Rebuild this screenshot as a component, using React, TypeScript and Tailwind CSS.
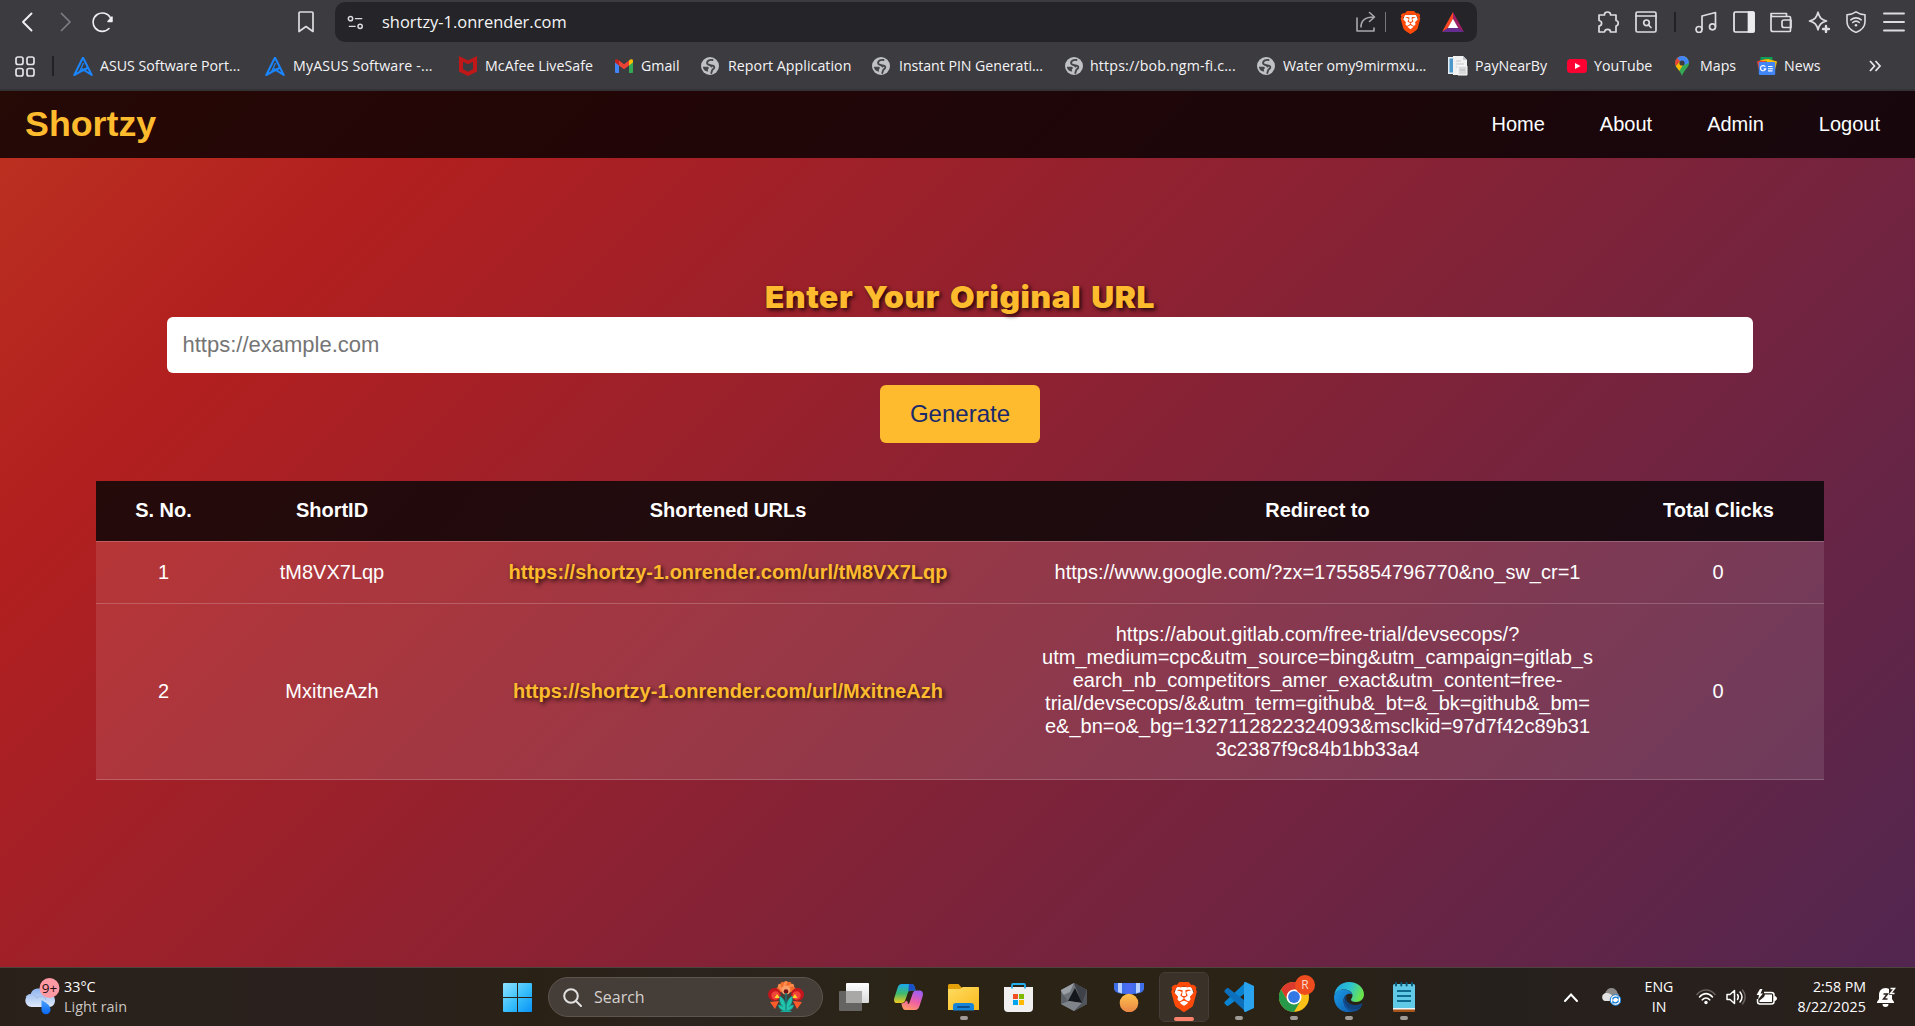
import React from "react";
import { SiBrave } from "react-icons/si";

const ui = "font-['Open_Sans',sans-serif]";
const arial = "font-['Liberation_Sans',Arial,sans-serif]";

/* ---------- browser toolbar icons ---------- */

function Line({ children, size = 22, sw = 1.5, color = "#dddde0" }: { children: React.ReactNode; size?: number; sw?: number; color?: string }) {
  return (
    <svg width={size} height={size} viewBox="0 0 22 22" fill="none" stroke={color} strokeWidth={sw} strokeLinecap="round" strokeLinejoin="round" className="block shrink-0">
      {children}
    </svg>
  );
}

const Back = () => <Line sw={1.9} color="#f0f0f2"><path d="M15.500 2.500 7 11l8.500 8.500" /></Line>;
const Forward = () => <Line sw={1.7} color="#7d7d82"><path d="M7.500 2.500 16 11l-8.500 8.500" /></Line>;
const Reload = () => (
  <Line sw={1.6} color="#f0f0f2">
    <path d="M17 17.500A9.200 9.200 0 1 1 18.500 7" />
    <path d="M20 6v4.500h-4z" fill="#f0f0f2" strokeWidth="1.500" />
  </Line>
);
const Bookmark = () => <Line sw={1.7}><path d="M5 1h12a1 1 0 0 1 1 1v18.500l-7-5-7 5V2a1 1 0 0 1 1-1z" /></Line>;
const Tune = () => (
  <Line size={17} sw={1.9}>
    <circle cx="4.500" cy="6" r="2.800" /><path d="M11 6h8M3 16h7.500" /><circle cx="17" cy="16" r="2.800" />
  </Line>
);
const Share = () => (
  <Line sw={1.6} color="#a9a9ad">
    <path d="M2 7v13h17v-3M6 16c0-6 3-10 13-10M14.500 1.500 19.500 6l-5 4.500" />
  </Line>
);
const Puzzle = () => (
  <Line sw={1.7}>
    <path d="M2 4h5.500C7 0 14 0 13.500 4H19v5.500c3 .5 3 5 0 5.500v6h-5.500c0-3.500-5.500-3.500-6 0H2v-6c3.500-.5 3.500-5 0-5.500z" />
  </Line>
);
const PageSearch = () => (
  <Line sw={1.7}>
    <rect x="1" y="1" width="20" height="20" rx="1.500" /><path d="M1 5h20M13.500 14l2.500 2.500" /><circle cx="11.500" cy="11.800" r="2.800" />
  </Line>
);
const Music = () => (
  <Line sw={1.7}>
    <circle cx="4" cy="18.500" r="3" /><circle cx="17.500" cy="15.800" r="3" /><path d="M7 18.500V5l13.500-3.500v14" />
  </Line>
);
const Sidebar = () => (
  <Line sw={1.7} color="#ececef"><rect x="1" y="1" width="20" height="20" rx="1.500" /><path d="M15.500 1H20a1 1 0 0 1 1 1v18a1 1 0 0 1-1 1h-4.500z" fill="#ececef" /></Line>
);
const Wallet = () => (
  <Line sw={1.7}>
    <path d="M1 2.500h15.500v3M1 2.500v16a2 2 0 0 0 2 2h16.500a1 1 0 0 0 1-1V6.500a1 1 0 0 0-1-1H3a2 2 0 0 1-2-2" />
    <path d="M21 9h-7a2 2 0 0 0-2 2v3.500a2 2 0 0 0 2 2h7z" />
  </Line>
);
const Sparkle = () => (
  <Line sw={1.7}>
    <path d="M10 1.200c1.500 5.500 3 7.300 8.500 8.800-5.500 1.500-7 3.300-8.500 8.800C8.500 13.300 7 11.500 1.500 10 7 8.500 8.500 6.700 10 1.200z" />
    <path d="M18 15v6M15 18h6" strokeWidth="2.400" />
  </Line>
);
const Vpn = () => (
  <Line sw={1.6}>
    <path d="M11 .8c3 2 5.500 2.700 9 2.900v7c0 5-3.500 8.500-9 10.700C5.500 19.200 2 15.700 2 10.700v-7C5.500 3.500 8 2.800 11 .8z" />
    <path d="M5.800 8.800c3-2.600 7.400-2.600 10.400 0M7.700 11.500c2-1.700 4.600-1.700 6.600 0" /><circle cx="11" cy="14.200" r="1.300" fill="#dddde0" stroke="none" />
  </Line>
);
const Menu = () => <Line sw={1.9}><path d="M1 2.500h20M1 11h20M1 19.500h20" /></Line>;

function Brave({ size, className = "" }: { size: number; className?: string }) {
  return (
    <span className={`grid shrink-0 place-items-center ${className}`}>
      <svg width={size} height={size} viewBox="0 0 24 24" className="col-start-1 row-start-1">
        <path d="M6 4h12l2 6-3 8-5 3.500L7 18l-3-8z" fill="#fff" />
      </svg>
      <SiBrave size={size} color="#ff4a0a" className="col-start-1 row-start-1" />
    </span>
  );
}
const Bat = () => (
  <svg width="22" height="20" viewBox="0 0 22 20" className="shrink-0">
    <path d="M11 0 0 20l6-4 5-9z" fill="#ff4724" />
    <path d="M11 0l11 20-6-4-5-9z" fill="#9e1f63" />
    <path d="M0 20h22l-6-4H6z" fill="#662d91" />
    <path d="m11 6.800 5.200 9.200H5.800z" fill="#fff" />
  </svg>
);

/* ---------- bookmark icons ---------- */

const Asus = () => (
  <svg width="20" height="21" viewBox="0 0 20 21" fill="none" stroke="#1a86ff" strokeWidth="2" strokeLinejoin="round">
    <path d="M10 1.500 1.300 19l4.700-2.600L14.500 12M10 1.500 18.700 19 8.500 12.500" />
    <path d="M6 17 10.500 7" strokeWidth="1.300" />
  </svg>
);
const McAfee = () => (
  <svg width="18" height="20" viewBox="0 0 18 20"><path d="M0 0l9 4.500L18 0v15.500L9 20l-9-4.500zM4 5.800v7.400l5 2.500 5-2.500V5.800L9 8.300z" fill="#c01818" fillRule="evenodd" /></svg>
);
const Gmail = () => (
  <svg width="18" height="14" viewBox="0 0 18 14">
    <path d="M0 2v11a1 1 0 0 0 1 1h3V5z" fill="#4285f4" /><path d="M18 2v11a1 1 0 0 1-1 1h-3V5z" fill="#34a853" />
    <path d="M4 1.500 9 5.300l5-3.800v5L9 10.300 4 6.500z" fill="#ea4335" />
    <path d="M0 2C0 0 2-.3 4 1.500v5L0 3.500z" fill="#c5221f" /><path d="M18 2c0-2-2-2.300-4-.5v5l4-3z" fill="#fbbc04" />
  </svg>
);
const Globe = () => (
  <svg width="18" height="18" viewBox="0 0 18 18">
    <circle cx="9" cy="9" r="9" fill="#bfc1c5" />
    <path d="M11.500 3C8 2.500 6 4 6 6c0 2.500 4.500 1.500 4.500 3.500" fill="none" stroke="#46454a" strokeWidth="1.900" strokeLinecap="round" />
    <path d="M1.900 9.800h4.600c1.800 0 1.500 1.700.8 2.300-.6.600-.6 1.500 0 2.300C4.300 15 2 12.700 1.900 9.800z" fill="#46454a" />
    <path d="M10 8.500c3 0 3.500 1 3.200 2.200-.3 1.500-1.700 1.300-2.200 3l-.7 2.300" fill="none" stroke="#46454a" strokeWidth="1.900" strokeLinecap="round" />
  </svg>
);
const Paper = () => (
  <svg width="20" height="20" viewBox="0 0 20 20">
    <path d="M0 1h7v17H0z" fill="#e6eef5" /><path d="M1.500 2.500h3.500v14H1.500z" fill="#4c97c9" />
    <path d="M5 0h10l4 4v15H5z" fill="#f1f1f1" /><path d="M15 0v4h4z" fill="#bcc7cf" />
    <path d="M8 5h5M8 8h8M8 11h3" stroke="#c3cbd1" strokeWidth="1" /><path d="M10 10h9v9h-9z" fill="#dadada" stroke="#fff" /><path d="M12 14h5" stroke="#b5bac0" />
  </svg>
);
const YouTube = () => (
  <svg width="20" height="14" viewBox="0 0 20 14"><rect width="20" height="14" rx="3.500" fill="#ff0033" /><path d="m8 4 5.500 3L8 10z" fill="#fff" /></svg>
);
const Maps = () => (
  <svg width="14" height="20" viewBox="0 0 14 20">
    <clipPath id="pin"><path d="M7 0a7 7 0 0 1 7 7c0 4.500-4.500 6-7 13C4.500 13 0 11.500 0 7a7 7 0 0 1 7-7z" /></clipPath>
    <g clipPath="url(#pin)">
      <path d="M0 0h14v20H0z" fill="#34a853" /><path d="M-2 13 9 0h5L3.500 16z" fill="#fbbc04" />
      <path d="M0 0h9L1 10-3 6z" fill="#ea4335" /><path d="M2 2 7 7l5-6L7-1z" fill="#4285f4" /><path d="m9 0 5 3v4L9.500 9 7 7z" fill="#4285f4" />
    </g>
    <circle cx="7" cy="7" r="2.600" fill="#3c3b40" />
  </svg>
);
const News = () => (
  <svg width="20" height="18" viewBox="0 0 20 18">
    <path d="M3.500 0h12v6h-12z" fill="#0c9d58" /><path d="m0 4.500 8-2.500 3 8-9 3z" fill="#ea4335" /><path d="m20 4.500-9-2.500-4 8 11 3z" fill="#fbbc04" /><path d="M2 4l8-2 5 2z" fill="#fbbc04" />
    <rect x="1.800" y="5" width="16.400" height="13" rx="1" fill="#4285f4" />
    <path d="M8.300 9.800a2.600 2.600 0 1 0 .3 2h-2" stroke="#fff" strokeWidth="1.200" fill="none" /><path d="M11 9.500h4.500M11 11.700h5M11 13.900h4.500" stroke="#fff" strokeWidth="1.100" />
  </svg>
);

const bookmarks = [
  { Icon: Asus, label: "ASUS Software Port...", w: "w-[192px]", slot: "w-[27px]", fit: "" },
  { Icon: Asus, label: "MyASUS Software -...", w: "w-[194px]", slot: "w-[28px]", fit: "tracking-[0.150px]" },
  { Icon: McAfee, label: "McAfee LiveSafe", w: "w-[156px]", slot: "w-[26px]", fit: "tracking-[0.050px]" },
  { Icon: Gmail, label: "Gmail", w: "w-[86px]", slot: "w-[26px]", fit: "" },
  { Icon: Globe, label: "Report Application", w: "w-[171px]", slot: "w-[27px]", fit: "tracking-[0.050px]" },
  { Icon: Globe, label: "Instant PIN Generati...", w: "w-[193px]", slot: "w-[27px]", fit: "tracking-[-0.050px]" },
  { Icon: Globe, label: "https://bob.ngm-fi.c...", w: "w-[192px]", slot: "w-[25px]", fit: "tracking-[0.160px]" },
  { Icon: Globe, label: "Water omy9mirmxu...", w: "w-[191px]", slot: "w-[26px]", fit: "" },
  { Icon: Paper, label: "PayNearBy", w: "w-[119px]", slot: "w-[27px]", fit: "" },
  { Icon: YouTube, label: "YouTube", w: "w-[108px]", slot: "w-[27px]", fit: "" },
  { Icon: Maps, label: "Maps", w: "w-[82px]", slot: "w-[25px]", fit: "" },
  { Icon: News, label: "News", w: "w-[111px]", slot: "w-[27px]", fit: "" },
];

function BrowserChrome() {
  return (
    <header className={`flex h-[91px] shrink-0 flex-col border-b-2 border-[#323237] bg-[#3c3b40] text-[#f4f4f6] ${ui}`}>
      <div className="flex h-11 items-center pl-4">
        <div className="flex w-[279px] items-center gap-4">
          <Back /><Forward /><Reload />
        </div>
        <Bookmark />
        <div className="ml-[18px] flex h-10 w-[1142px] items-center rounded-[10px] bg-[#252428] pl-3 pr-[13px]">
          <Tune />
          <span className="ml-[18px] whitespace-pre text-[16.450px] leading-none">shortzy-1.onrender.com</span>
          <div className="ml-auto flex items-center">
            <Share />
            <span className="ml-2 h-5 w-px bg-[#77777b]" />
            <Brave size={23} className="ml-[13px]" />
            <span className="ml-[20px] flex"><Bat /></span>
          </div>
        </div>
        <div className="ml-[120px] flex items-center gap-4">
          <Puzzle /><PageSearch />
        </div>
        <span className="ml-[17px] h-5 w-0.5 bg-[#222225]" />
        <div className="ml-[19px] flex items-center gap-[15.500px]">
          <Music /><Sidebar /><Wallet /><Sparkle /><Vpn /><Menu />
        </div>
      </div>
      <div className="flex h-[44px] items-center pl-[15px]">
        <svg width="20" height="21" viewBox="0 0 20 21" fill="none" stroke="#e4e4e6" strokeWidth="1.700">
          <rect x="1" y="1" width="7" height="7.500" rx="2" /><rect x="12" y="1" width="7" height="7.500" rx="2" /><rect x="1" y="12.500" width="7" height="7.500" rx="2" /><rect x="12" y="12.500" width="7" height="7.500" rx="2" />
        </svg>
        <span className="ml-[17px] mr-[19px] h-5 w-0.5 shrink-0 bg-[#222225]" />
        {bookmarks.map(({ Icon, label, w, slot, fit }) => (
          <div key={label} className={`flex shrink-0 items-center ${w}`}>
            <span className={`flex shrink-0 ${slot}`}><Icon /></span>
            <span className={`whitespace-nowrap text-[14.200px] leading-none ${fit}`}>{label}</span>
          </div>
        ))}
        <svg width="14" height="14" viewBox="0 0 14 14" fill="none" stroke="#e4e4e6" strokeWidth="1.800"><path d="m2 2 4.500 5L2 12M7.500 2 12 7l-4.500 5" /></svg>
      </div>
    </header>
  );
}

/* ---------- web page ---------- */

const links = [
  { id: "tM8VX7Lqp", to: ["https://www.google.com/?zx=1755854796770&no_sw_cr=1"], h: "h-[62px]" },
  {
    id: "MxitneAzh",
    to: [
      "https://about.gitlab.com/free-trial/devsecops/?",
      "utm_medium=cpc&utm_source=bing&utm_campaign=gitlab_s",
      "earch_nb_competitors_amer_exact&utm_content=free-",
      "trial/devsecops/&&utm_term=github&_bt=&_bk=github&_bm=",
      "e&_bn=o&_bg=1327112822324093&msclkid=97d7f42c89b31",
      "3c2387f9c84b1bb33a4",
    ],
    h: "h-[176px]",
  },
];

function Page() {
  return (
    <main className={`flex min-h-0 flex-1 flex-col bg-[linear-gradient(135deg,#fdbb2d_-115.500%,#b21f1f_16.500%,#1a2a6c_148%)] text-white ${arial}`}>
      <nav className="flex h-[67px] shrink-0 items-center justify-between bg-black/80 pl-[25px] pr-[35px]">
        <span className="text-[35.800px] font-bold leading-none text-[#fdbb2d]">Shortzy</span>
        <div className="flex gap-[55px] pb-0.5 text-[20px]">
          <a>Home</a><a>About</a><a>Admin</a><a>Logout</a>
        </div>
      </nav>
      <form className="mt-[120px] flex flex-col items-center pl-[5px]">
        <label className="flex h-[39px] scale-x-[1.060] items-center whitespace-nowrap pb-0.5 font-['Inter',sans-serif] text-[30px] font-black leading-none tracking-[0.500px] text-[#fdbb2d] [text-shadow:2px_2px_4px_rgba(0,0,0,0.800)] [word-spacing:3px]">Enter Your Original URL</label>
        <input className="h-[56px] w-[1586px] rounded-[6px] bg-white pl-[15.500px] text-[22px] placeholder:text-[#757575]" placeholder="https://example.com" />
        <button type="button" className="mt-3 h-[58px] w-[160px] rounded-[6px] bg-[#fdbb2d] text-[24px] text-[#1a2a6c]">Generate</button>
      </form>
      <table className="ml-[96px] mt-[38px] w-[1728px] table-fixed border-collapse bg-white/10 text-center text-[20px] leading-[23px]">
        <colgroup>
          <col className="w-[134px]" /><col className="w-[203px]" /><col className="w-[590px]" /><col className="w-[588px]" /><col className="w-[213px]" />
        </colgroup>
        <thead>
          <tr className="h-[60px] border-b border-white/20 bg-black/80">
            <th className="pl-px">S. No.</th><th className="pl-px">ShortID</th><th>Shortened URLs</th><th className="pl-px">Redirect to</th><th className="pl-0.5">Total Clicks</th>
          </tr>
        </thead>
        <tbody>
          {links.map((l, i) => (
            <tr key={l.id} className={`border-b border-white/20 ${l.h}`}>
              <td className="pl-px">{i + 1}</td>
              <td className="pl-px">{l.id}</td>
              <td className="font-bold text-[#fdbb2d] [text-shadow:2px_2px_4px_rgba(0,0,0,0.800)]">https://shortzy-1.onrender.com/url/{l.id}</td>
              <td className={i === 1 ? "pt-0.5" : ""}>{l.to.map((t) => <div key={t} className="whitespace-nowrap pl-px">{t}</div>)}</td>
              <td className="pl-px">0</td>
            </tr>
          ))}
        </tbody>
      </table>
    </main>
  );
}

/* ---------- taskbar icons ---------- */

const Weather = () => (
  <svg width="36" height="38" viewBox="0 0 36 38">
    <defs>
      <linearGradient id="cloud" x1="0" y1="0" x2="0" y2="1"><stop stopColor="#8db4ee" /><stop offset="1" stopColor="#dfe9fb" /></linearGradient>
      <linearGradient id="drop" x1="0" y1="0" x2="0" y2="1"><stop stopColor="#4ba3ff" /><stop offset="1" stopColor="#0a66f0" /></linearGradient>
    </defs>
    <path d="M6.500 29a6.500 6.500 0 0 1-.8-12.900C7 11.500 11 10 15 10.500c4.500-1 8 2 8.500 5.500 5 .5 6.500 3.500 6.500 6.500s-2 6.500-6 6.500z" fill="url(#cloud)" />
    <path d="M1 19c4-4 9-3 11 1 3-3 8-2 9 2" fill="none" stroke="#a5bfe9" strokeWidth="1.200" />
    <path d="M16.500 22c5.500 3 9 6 9 9.700a4.500 4.500 0 0 1-9 0z" fill="url(#drop)" />
    <circle cx="24.500" cy="10" r="10" fill="#ff99a4" />
    <text x="24.500" y="15" textAnchor="middle" fontSize="13.500" fontFamily="Open Sans, sans-serif" fill="#1c1012">9+</text>
  </svg>
);
const Start = () => (
  <svg width="29" height="29" viewBox="0 0 29 29">
    <linearGradient id="win" x1="0" y1="0" x2="1" y2="1"><stop stopColor="#8ee2ff" /><stop offset=".55" stopColor="#35bdfb" /><stop offset="1" stopColor="#0a93f5" /></linearGradient>
    <path d="M1 0h13v14H0V1a1 1 0 0 1 1-1zM15 0h13a1 1 0 0 1 1 1v13H15zM0 15h14v14H1a1 1 0 0 1-1-1zM15 15h14v13a1 1 0 0 1-1 1H15z" fill="url(#win)" />
  </svg>
);
const Flower = () => (
  <svg width="36" height="32" viewBox="0 0 36 32">
    {[-75, -50, -25, 0, 25, 50, 75].map((a) => <ellipse key={a} cx="18" cy="4.500" rx="2.600" ry="4.500" fill={a % 50 ? "#f06a2a" : "#ff8a4c"} transform={`rotate(${a} 18 10)`} />)}
    <circle cx="18" cy="9" r="4.500" fill="#f9a06a" /><circle cx="18" cy="10.500" r="2.300" fill="#6d1018" />
    <circle cx="6.500" cy="13.500" r="6.500" fill="#c3151d" /><circle cx="29.500" cy="13.500" r="6.500" fill="#c3151d" />
    <circle cx="7.500" cy="14.500" r="4.200" fill="#f04438" /><circle cx="28.500" cy="14.500" r="4.200" fill="#f04438" />
    <path d="m6.500 17 2.500-4 3 4zM24 17l3-4 2.500 4z" fill="#ffd42a" />
    <path d="m2 21 9-1-4 8zM34 21l-9-1 4 8z" fill="#ff5a2a" />
    <path d="M18 12v19" stroke="#0e7c78" strokeWidth="1.500" />
    <path d="M17.500 30c-5-1-7-3-7-6 2 0 3.500.5 4.500 2-3-3-4-7-3-11 3 2 5 5 5.500 9M18.500 30c5-1 7-3 7-6-2 0-3.500.5-4.500 2 3-3 4-7 3-11-3 2-5 5-5.500 9" fill="#22c3ac" stroke="#128f86" strokeWidth=".6" />
    <path d="M12 31c3-3 9-3 12 0z" fill="#19a99a" />
  </svg>
);
const TaskView = () => (
  <svg width="30" height="28" viewBox="0 0 30 28">
    <linearGradient id="tv" x1="0" y1="0" x2="0" y2="1"><stop stopColor="#fff" /><stop offset="1" stopColor="#d9d9d9" /></linearGradient>
    <rect x="0" y="8" width="23" height="20" rx="1" fill="#666463" /><rect x="7" y="0" width="23" height="20" rx="1" fill="url(#tv)" /><path d="M7 8h16v12H8a1 1 0 0 1-1-1z" fill="#a9a8a7" />
  </svg>
);
const Copilot = () => (
  <svg width="29" height="26" viewBox="0 0 29 26">
    <defs>
      <linearGradient id="ca" x1="0" y1="0" x2="0" y2="1"><stop stopColor="#1aa7ee" /><stop offset=".5" stopColor="#3fba6d" /><stop offset="1" stopColor="#f5c91c" /></linearGradient>
      <linearGradient id="cb" x1=".6" y1="0" x2=".2" y2="1"><stop stopColor="#a25df0" /><stop offset=".5" stopColor="#ef5fa5" /><stop offset="1" stopColor="#ff9c62" /></linearGradient>
    </defs>
    <path d="M8 0h9.500c2 0 2.700 1.500 3.200 3l1 3.500h-4.500c-2.200 0-3 1-3.600 3L11.500 15.500c-.8 2.500-1.800 3.500-4.200 3.500H3.500C.5 19.500-.5 17 .3 14L3.500 4C4.300 1.500 5.500 0 8 0z" fill="url(#ca)" />
    <path d="M15 0h2.500c2 0 2.700 1.500 3.200 3l1 3.500h-4.500c-1.500 0-2.500.6-3 1.800z" fill="#1a50c9" />
    <path d="M21 26h-9.500c-2 0-2.700-1.500-3.200-3l-1-3.500c2.200 0 4-1 4.600-3l2 1.500c-.6 1.800 0 3 1.500 1l3.100-9c.8-2.500 1.800-3.500 4.200-3.500h2.800c3 0 4 2.500 3.200 5.500L25.500 22c-.8 2.500-2 4-4.500 4z" fill="url(#cb)" />
  </svg>
);
const Explorer = () => (
  <svg width="31" height="28" viewBox="0 0 31 28">
    <linearGradient id="fo" x1="0" y1="0" x2="1" y2="1"><stop stopColor="#ffdc62" /><stop offset="1" stopColor="#f9b91c" /></linearGradient>
    <path d="M1.500 1h9l3 3.500H31V10H0V2.500A1.500 1.500 0 0 1 1.500 1z" fill="#e3a008" /><path d="M0 6h12l3-2h15a1 1 0 0 1 1 1v22H0z" fill="url(#fo)" />
    <path d="M5 27.500V23a3 3 0 0 1 3-3h15a3 3 0 0 1 3 3v4.500z" fill="#1684d8" /><path d="M10 24h11" stroke="#0b4f90" strokeWidth="1.800" strokeLinecap="round" />
  </svg>
);
const Store = () => (
  <svg width="29" height="29" viewBox="0 0 29 29">
    <path d="M0 4h29v21a4 4 0 0 1-4 4H4a4 4 0 0 1-4-4z" fill="#f0f0f0" />
    <path d="M8 5.500V2a1 1 0 0 1 1-1h11a1 1 0 0 1 1 1v3.500" fill="none" stroke="#23b0ee" strokeWidth="1.800" />
    <path d="M9 11h5v5H9z" fill="#f25022" /><path d="M15 11h5v5h-5z" fill="#7fba00" /><path d="M9 17h5v5H9z" fill="#00a4ef" /><path d="M15 17h5v5h-5z" fill="#ffb900" />
  </svg>
);
const Gem = () => (
  <svg width="26" height="28" viewBox="0 0 26 28">
    <path d="M13 0 26 7v14l-13 7L0 21V7z" fill="#6d7279" /><path d="M13 0 0 7v6l9-4z" fill="#9ba0a6" /><path d="M13 0l13 7-5 14z" fill="#3e4248" /><path d="M0 8v13l8-1z" fill="#5b6067" />
    <path d="M14 5 7 18l14 2z" fill="#14171b" /><path d="M0 21l13 7 8-8-13-2z" fill="#7f848b" /><path d="M26 7v14l-13 7 8-8z" fill="#50555c" />
  </svg>
);
const Medal = () => (
  <svg width="30" height="29" viewBox="0 0 30 29">
    <linearGradient id="me" x1="0" y1="0" x2="0" y2="1"><stop stopColor="#ffc34d" /><stop offset="1" stopColor="#e98545" /></linearGradient>
    <path d="M0 0h30v6c-1 4-5 5-15 5S1 10 0 6z" fill="#3f6fe8" /><path d="M4 0h4v10.500L4 9zM22 0h4v9l-4 1.500z" fill="#b8d0ff" /><path d="M10 0h10l-2 11h-6z" fill="#4b6cf0" />
    <circle cx="15" cy="20" r="9.300" fill="url(#me)" />
  </svg>
);
const VsCode = () => (
  <svg width="30" height="30" viewBox="0 0 30 30">
    <path d="M22 0 1 19.500c-.8.8-.8 1.700 0 2.500l1.500 1.500c.7.600 1.500.700 2.300.1L24 9z" fill="#0a84d0" />
    <path d="m22 30-21-19.500c-.8-.8-.8-1.700 0-2.500l1.500-1.500c.7-.6 1.500-.7 2.300-.1L24 21z" fill="#0c70bd" />
    <path d="M21.500 0 30 4v22l-8.500 4c-.8.200-1.500-.4-1.500-1V1c0-.7.700-1.200 1.500-1z" fill="#2aa4ee" />
  </svg>
);
const Chrome = () => (
  <svg width="30" height="30" viewBox="0 0 30 30">
    <circle cx="15" cy="15" r="15" fill="#fbc116" /><path d="M15 7.500h13A15 15 0 0 0 2 7.500l6.500 11.300z" fill="#dc3a2d" />
    <path d="M2 7.500A15 15 0 0 0 15 30l6.500-11.200L15 22.500l-6.500-3.700z" fill="#27994a" />
    <circle cx="15" cy="15" r="7.500" fill="#fff" /><circle cx="15" cy="15" r="5.900" fill="#3478e5" />
  </svg>
);
const Edge = () => (
  <svg width="30" height="30" viewBox="0 0 30 30">
    <defs>
      <linearGradient id="ea" x1="0" y1="0" x2="1" y2=".3"><stop stopColor="#1a9fe0" /><stop offset=".55" stopColor="#2cc3d2" /><stop offset="1" stopColor="#68e34f" /></linearGradient>
      <linearGradient id="eb" x1="0" y1="0" x2="1" y2="1"><stop stopColor="#1c9be6" /><stop offset="1" stopColor="#0b5cae" /></linearGradient>
    </defs>
    <path d="M.2 13C1.500 5 7.500 0 15 0c9 0 15 6 15 12.500 0 4.500-3.500 7.500-8 7.500-3.500 0-5-1.200-5-2.300 0-1.200 1.500-1.700 1.500-4.200C18.500 10 14.500 7.500 10 7.500 6 7.500 2 9.500.2 13z" fill="url(#ea)" />
    <path d="M0 15c0-4 4.500-7.500 9.500-7.500 4.500 0 8 2 8.800 5C15 10.500 9.500 13 9.500 19c0 5 4.500 9.500 9.500 10.500C9 32.500 0 25.500 0 15z" fill="url(#eb)" />
    <path d="M12.500 13.500C9 19 12.500 27 20.500 27c3 0 5.500-1 7.500-3-2 3.500-5.300 5.500-9 5.800C13 29 9.300 24 9.500 19c.1-2.500 1.200-4.500 3-5.500z" fill="#144f96" />
    <path d="M12.500 13.500c-1.500 6 3 9.500 8.500 9.500 3 0 5-.7 6.500-1.500.8-.4 1.300.2.900.9-2 3.600-5.500 5.200-8.900 5-7-.4-10-8-7-13.900z" fill="#10447f" />
  </svg>
);
const Notepad = () => (
  <svg width="22" height="30" viewBox="0 0 22 30">
    <rect y="25" width="22" height="5" rx="1" fill="#a7541b" /><path d="M0 24h22v3.500H0z" fill="#f3f3f3" /><path d="M1.500 2h19A1.500 1.500 0 0 1 22 3.500V26H0V3.500A1.500 1.500 0 0 1 1.500 2z" fill="#61cbe7" />
    <path d="M3 1v2.500M8.300 1v2.500M13.600 1v2.500M19 1v2.500" stroke="#0b5a78" strokeWidth="2" strokeLinecap="round" /><path d="M4 9h14M4 14h14M4 19h14" stroke="#0d6c90" strokeWidth="1.800" />
  </svg>
);

function Task({ children, w = "w-[55px]", running = false }: { children: React.ReactNode; w?: string; running?: boolean }) {
  return (
    <div className={`relative flex h-[50px] shrink-0 items-center justify-center ${w}`}>
      {children}
      {running && <span className="absolute bottom-0.5 left-1/2 h-1 w-2 -translate-x-1/2 rounded-full bg-[#a19b97]" />}
    </div>
  );
}

const Tray = {
  Caret: () => <svg width="14" height="9" viewBox="0 0 14 9" fill="none" stroke="#fff" strokeWidth="2" strokeLinecap="round"><path d="m1 8 6-6.500L13 8" /></svg>,
  Cloud: () => (
    <svg width="20" height="18" viewBox="0 0 20 18">
      <path d="M4 13a4 4 0 0 1 0-7.500C5 2 7.500 0 10.500 0c3 0 5.500 2 6 5 1.500 1 2 3 1.500 5l-5 3z" fill="#8d8b8a" /><path d="M4 13A4 4 0 0 1 3.500 5.500c4-1.500 7 1 9.500 4l-3 3.500z" fill="#e2e2e2" />
      <circle cx="14.500" cy="12" r="5.300" fill="#fff" stroke="#1a7fd4" /><path d="M11.500 11.500a3.200 3.200 0 0 1 5.500-1.300V8.500M17.500 12.500a3.200 3.200 0 0 1-5.500 1.300v1.700" fill="none" stroke="#1a7fd4" strokeWidth="1.400" />
    </svg>
  ),
  Wifi: () => (
    <svg width="20" height="16" viewBox="0 0 20 16" fill="none" strokeWidth="1.600" strokeLinecap="round">
      <path d="M1 5.500c5-6 13-6 18 0" stroke="#67625f" /><path d="M3.500 8c4-4.500 9-4.500 13 0M6.300 10.800c2.300-2.500 5.100-2.500 7.400 0" stroke="#fff" /><circle cx="10" cy="13.500" r="1.700" fill="#fff" />
    </svg>
  ),
  Sound: () => (
    <svg width="20" height="18" viewBox="0 0 20 18" fill="none" strokeWidth="1.500" strokeLinecap="round" strokeLinejoin="round" stroke="#fff">
      <path d="M1 6.500v5h3l4.500 4V2.500L4 6.500z" /><path d="M11.500 6.500c1 1.500 1 3.500 0 5M14 4c2.400 3 2.400 7 0 10" /><path d="M16.500 2c3.500 4 3.500 10 0 14" stroke="#67625f" />
    </svg>
  ),
  Battery: () => (
    <svg width="21" height="17" viewBox="0 0 21 17">
      <path d="M8 3.500h7.500a2.500 2.500 0 0 1 2.500 2.500v6.500a2.500 2.500 0 0 1-2.500 2.500H4a2.500 2.500 0 0 1-2.500-2.500V10" fill="none" stroke="#fff" strokeWidth="1.500" />
      <path d="M9 5.500h7v7.500h-12.500V11.500L8 8z" fill="#fff" /><path d="M18.500 7.500a2 2 0 0 1 0 4z" fill="#fff" stroke="#fff" /><path d="M4 0 .5 6H3l-1 4.500L7 4.500H4.500L6.500 0z" fill="#fff" />
    </svg>
  ),
  Bell: () => (
    <svg width="19" height="20" viewBox="0 0 19 20">
      <path d="M8.500 1C4.500 1 2 4 2 8v4l-2 3v1h17v-1l-2-3V8c0-4-2.500-7-6.500-7zM5.500 17a3 3 0 0 0 6 0z" fill="#fff" />
      <path d="M12 0h7v8h-7z" fill="#29201c" /><path d="M6.500 7h4l-4 5h4" fill="none" stroke="#29201c" strokeWidth="1.500" /><path d="M13.500 1.500h4l-4 5h4" fill="none" stroke="#fff" strokeWidth="1.500" />
    </svg>
  ),
};

function Taskbar() {
  return (
    <footer className={`flex h-[59px] shrink-0 items-center border-t border-[#4e443e] bg-[linear-gradient(90deg,#292119,#2a211f_18%,#2a2116_28%,#2a231e_36%,#2b2416_48%,#2b2315_65%,#26201d_78%,#29201b)] text-white ${ui}`}>
      <div className="flex w-[503px] shrink-0 items-center pl-[25px]">
        <Weather />
        <div className="ml-[3px] text-[14.400px] leading-5">
          <div>33°C</div>
          <div className="text-[#c9c5c2]">Light rain</div>
        </div>
      </div>
      <Start />
      <div className="ml-4 flex h-10 w-[275px] shrink-0 items-center rounded-full border border-[#5d554e] bg-[#453e38] pl-[14px] pr-[18px]">
        <svg width="19" height="19" viewBox="0 0 19 19" fill="none" stroke="#e3e1e0" strokeWidth="2" strokeLinecap="round"><circle cx="8" cy="8" r="6.800" /><path d="m13 13 5 5" /></svg>
        <span className="ml-[12px] text-[16px] leading-none text-[#d4d0ce]">Search</span>
        <span className="ml-auto"><Flower /></span>
      </div>
      <Task w="ml-1 w-[54px]"><TaskView /></Task>
      <Task><Copilot /></Task>
      <Task running><Explorer /></Task>
      <Task><Store /></Task>
      <Task><Gem /></Task>
      <Task><Medal /></Task>
      <div className="relative mx-[2.500px] flex size-[50px] shrink-0 items-center justify-center rounded-md border border-[#453d36] bg-[#3a3228]">
        <Brave size={30} />
        <span className="absolute bottom-0 left-1/2 h-1 w-5 -translate-x-1/2 rounded-full bg-[#f9826c]" />
      </div>
      <Task running><VsCode /></Task>
      <Task running>
        <Chrome />
        <span className="absolute right-[6px] top-[3px] flex size-5 items-center justify-center rounded-full bg-[#ee4b1f] text-[12px] leading-none text-[#ffd9cc]">R</span>
      </Task>
      <Task running><Edge /></Task>
      <Task running><Notepad /></Task>
      <div className="ml-auto flex shrink-0 items-center pr-[19px] text-[14.200px] leading-5">
        <Tray.Caret />
        <span className="ml-[23px]"><Tray.Cloud /></span>
        <div className="ml-[16px] w-[44px] text-center">ENG<br />IN</div>
        <span className="ml-[15px]"><Tray.Wifi /></span>
        <span className="ml-[10px]"><Tray.Sound /></span>
        <span className="ml-[10px]"><Tray.Battery /></span>
        <div className="ml-[12px] w-[77px] whitespace-nowrap text-right"><div>2:58 PM</div><div className="flex justify-end tracking-[0.150px]">8/22/2025</div></div>
        <span className="ml-[11px]"><Tray.Bell /></span>
      </div>
    </footer>
  );
}

export default function App() {
  return (
    <div className="flex h-[1026px] w-[1915px] flex-col overflow-hidden">
      <BrowserChrome />
      <Page />
      <Taskbar />
    </div>
  );
}
